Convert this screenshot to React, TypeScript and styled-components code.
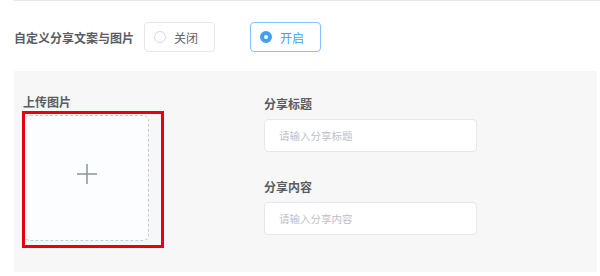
import React, { ReactElement } from 'react';
import styled, { createGlobalStyle } from 'styled-components';

const GlobalStyle = createGlobalStyle`
  body {
    margin: 0;
    background: #fff;
    font-family: "Noto Sans CJK SC", "Noto Sans", sans-serif;
  }
`;

const Page = styled.div`
  padding-left: 14px;
`;

const TopRule = styled.div`
  height: 1px;
  background: #e4e7ed;
`;

const SwitchRow = styled.div`
  display: flex;
  align-items: center;
  height: 30px;
  margin-top: 21px;
`;

const RowLabel = styled.span`
  width: 130px;
  font-size: 12px;
  font-weight: 700;
  color: #5a5c61;
`;

const RadioButton = styled.label<{ $checked?: boolean }>`
  display: flex;
  align-items: center;
  box-sizing: border-box;
  width: 71px;
  height: 30px;
  margin-right: 35px;
  padding-left: 9px;
  border: 1px solid ${(p) => (p.$checked ? '#85c1ff' : '#e4e7ed')};
  border-radius: 4px;
  font-size: 12px;
  color: ${(p) => (p.$checked ? '#409eff' : '#606266')};
`;

const RadioDot = styled.span<{ $checked?: boolean }>`
  box-sizing: border-box;
  width: 12px;
  height: 12px;
  margin-right: 8px;
  border-radius: 50%;
  border: ${(p) => (p.$checked ? '4px solid #409eff' : '1px solid #d6d9e0')};
  background: #fff;
`;

const Panel = styled.div`
  display: flex;
  width: 574px;
  height: 178px;
  margin-top: 19px;
  padding: 23px 0 0 9px;
  background: #f7f7f7;
`;

const UploadColumn = styled.div`
  width: 241px;
`;

const FieldColumn = styled.div`
  width: 213px;
  padding-top: 2px;
`;

const FieldLabel = styled.div<{ $gap?: number }>`
  height: 16px;
  line-height: 16px;
  margin-top: ${(p) => p.$gap ?? 0}px;
  margin-bottom: 7px;
  font-size: 12px;
  font-weight: 700;
  color: #5a5c61;
`;

const UploadLabel = styled(FieldLabel)`
  margin-bottom: 5px;
`;

const Frame = styled.div`
  position: relative;
  margin-left: 1px;
`;

const Uploader = styled.div`
  display: flex;
  align-items: center;
  justify-content: center;
  box-sizing: border-box;
  width: 125px;
  height: 126px;
  padding-bottom: 8px;
  border: 1px dashed #c0ccda;
  border-radius: 6px;
  background: #fbfdff;
  color: #8c939d;
`;

// red annotation drawn over the upload box
const Highlight = styled.div`
  position: absolute;
  left: -2px;
  top: -4px;
  width: 142px;
  height: 137px;
  box-sizing: border-box;
  border: 3px solid #e60012;
  pointer-events: none;
`;

const TextInput = styled.input`
  display: block;
  box-sizing: border-box;
  width: 213px;
  height: 33px;
  padding: 0 14px;
  border: 1px solid #e4e7ed;
  border-radius: 4px;
  background: #fff;
  font-family: inherit;
  font-size: 10.5px;
  outline: none;

  &::placeholder {
    color: #bcc0c8;
  }
`;

const PlusIcon = () => (
  <svg width="20" height="20" viewBox="0 0 20 20">
    <path d="M10 0v20M0 10h20" stroke="currentColor" strokeWidth="1.5" fill="none" />
  </svg>
);

const App = (): ReactElement => (
  <Page>
    <GlobalStyle />
    <TopRule />
    <SwitchRow>
      <RowLabel>自定义分享文案与图片</RowLabel>
      <RadioButton>
        <RadioDot />
        关闭
      </RadioButton>
      <RadioButton $checked>
        <RadioDot $checked />
        开启
      </RadioButton>
    </SwitchRow>
    <Panel>
      <UploadColumn>
        <UploadLabel>上传图片</UploadLabel>
        <Frame>
          <Uploader>
            <PlusIcon />
          </Uploader>
          <Highlight />
        </Frame>
      </UploadColumn>
      <FieldColumn>
        <FieldLabel>分享标题</FieldLabel>
        <TextInput placeholder="请输入分享标题" />
        <FieldLabel $gap={27}>分享内容</FieldLabel>
        <TextInput placeholder="请输入分享内容" />
      </FieldColumn>
    </Panel>
  </Page>
);

export default App;
